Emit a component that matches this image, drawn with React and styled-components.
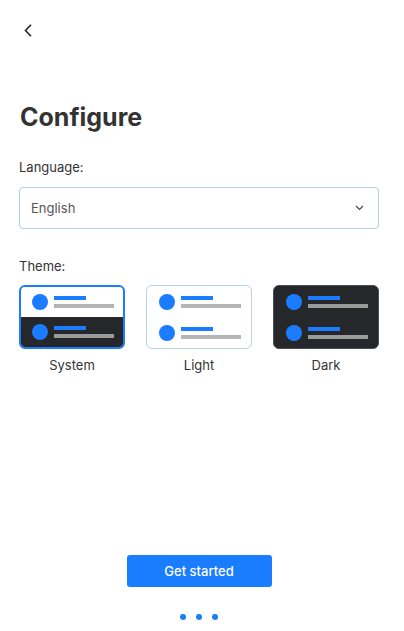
import React from 'react'
import styled, { createGlobalStyle } from 'styled-components'

const GlobalStyle = createGlobalStyle`
  html, body {
    margin: 0;
    padding: 0;
    background: #fff;
  }
  body {
    font-family: Inter, "Noto Sans", sans-serif;
    color: #333;
    -webkit-font-smoothing: antialiased;
  }
`

const Page = styled.div`
  width: 404px;
  height: 631px;
  box-sizing: border-box;
  padding: 24px 25px 0 19px;
  display: flex;
  flex-direction: column;
`

const BackButton = styled.button`
  border: none;
  background: none;
  padding: 0;
  margin-left: 5px;
  width: 9px;
  height: 13px;
  display: flex;
  cursor: pointer;
`

const Title = styled.h1`
  margin: 65px 0 0 1px;
  font-size: 25px;
  line-height: 30px;
  font-weight: 700;
  color: #333;
`

const Label = styled.div`
  font-size: 13px;
  line-height: 16px;
  color: #333;
  margin-top: ${props => props.top}px;
`

const Select = styled.div`
  margin-top: 12px;
  height: 42px;
  box-sizing: border-box;
  border: 1px solid #b3d0ea;
  border-radius: 4px;
  display: flex;
  align-items: center;
  justify-content: space-between;
  padding: 0 14px 0 11px;
  font-size: 13px;
  color: #555;
`

const ThemeRow = styled.div`
  margin-top: 11px;
  display: flex;
  justify-content: space-between;
`

const ThemeOption = styled.div`
  display: flex;
  flex-direction: column;
  align-items: center;
  gap: 8px;
  cursor: pointer;
`

const Card = styled.div`
  width: 106px;
  height: 64px;
  box-sizing: border-box;
  border-radius: 6px;
  overflow: hidden;
  display: flex;
  flex-direction: column;
  border: ${props => props.selected ? '2px solid #1a7cff' : props.dark ? '1px solid #4a4e55' : '1px solid #b8d2e8'};
  background: ${props => props.dark ? '#25272b' : '#fff'};
`

const CardRow = styled.div`
  flex: 1;
  display: flex;
  align-items: center;
  gap: 6px;
  padding-left: ${props => props.inset}px;
  background: ${props => props.dark ? '#25272b' : 'transparent'};
`

const Dot = styled.div`
  width: 16px;
  height: 16px;
  border-radius: 50%;
  background: #1a7cff;
`

const Lines = styled.div`
  display: flex;
  flex-direction: column;
  gap: 4px;
`

const Line = styled.div`
  height: 4px;
  width: ${props => props.short ? 32 : 60}px;
  background: ${props => props.short ? '#1a7cff' : props.dark ? '#9a9a9a' : '#b5b5b5'};
`

const OptionLabel = styled.div`
  font-size: 13px;
  line-height: 16px;
  color: #333;
`

const Spacer = styled.div`
  flex: 1;
`

const PrimaryButton = styled.button`
  align-self: center;
  width: 145px;
  height: 32px;
  border: none;
  border-radius: 3px;
  background: #1a7cff;
  color: #fff;
  font-family: Inter, "Noto Sans", sans-serif;
  font-size: 13px;
  font-weight: 500;
  cursor: pointer;
`

const Pager = styled.div`
  align-self: center;
  margin: 27px 0 11px 0;
  display: flex;
  gap: 10px;
`

const PagerDot = styled.div`
  width: 6px;
  height: 6px;
  border-radius: 50%;
  background: #1a7cff;
`

const Preview = ({ mode }) => {
  const topDark = mode === 'dark'
  const bottomDark = mode !== 'light'
  const inset = mode === 'system' ? 11 : 12
  return (
    <Card selected={mode === 'system'} dark={mode === 'dark'}>
      <CardRow dark={topDark} inset={inset}>
        <Dot />
        <Lines>
          <Line short />
          <Line dark={topDark} />
        </Lines>
      </CardRow>
      <CardRow dark={bottomDark} inset={inset}>
        <Dot />
        <Lines>
          <Line short />
          <Line dark={bottomDark} />
        </Lines>
      </CardRow>
    </Card>
  )
}

const themes = [
  { mode: 'system', label: 'System' },
  { mode: 'light', label: 'Light' },
  { mode: 'dark', label: 'Dark' },
]

export default function App() {
  return (
    <>
      <GlobalStyle />
      <Page>
        <BackButton aria-label='Back'>
          <svg width='9' height='13' viewBox='0 0 9 13' fill='none'>
            <path d='M7 0.8L1.5 6.5L7 12.2' stroke='#222' strokeWidth='1.6' />
          </svg>
        </BackButton>
        <Title>Configure</Title>
        <Label top={27}>Language:</Label>
        <Select>
          <span>English</span>
          <svg width='9' height='6' viewBox='0 0 9 6' fill='none'>
            <path d='M1 1L4.5 4.5L8 1' stroke='#444' strokeWidth='1.1' />
          </svg>
        </Select>
        <Label top={29}>Theme:</Label>
        <ThemeRow>
          {themes.map(t => (
            <ThemeOption key={t.mode}>
              <Preview mode={t.mode} />
              <OptionLabel>{t.label}</OptionLabel>
            </ThemeOption>
          ))}
        </ThemeRow>
        <Spacer />
        <PrimaryButton>Get started</PrimaryButton>
        <Pager>
          <PagerDot />
          <PagerDot />
          <PagerDot />
        </Pager>
      </Page>
    </>
  )
}
